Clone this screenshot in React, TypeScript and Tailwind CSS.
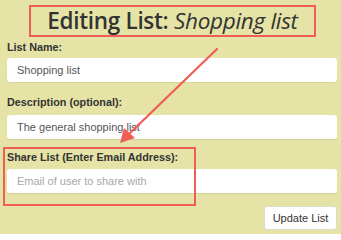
import React from "react";

export default function App() {
  return (
    <div className="relative w-[341px] h-[234px] overflow-hidden bg-[#e5e4a6] font-['Liberation_Sans',Arial,sans-serif]">
      <div className="flex flex-col pt-[5px] pl-[7px] pr-[4px]">
        <div className="ml-[22px] w-[287px] h-[32px] border-2 border-[#ef5d55] flex items-center justify-center">
          <h1 className="font-['Open_Sans',sans-serif] font-semibold text-[22.5px] leading-none text-[#333] whitespace-nowrap tracking-[-0.3px] pt-[1px]">
            Editing List: <em className="font-normal">Shopping list</em>
          </h1>
        </div>

        <label className="mt-[2px] h-[16px] leading-[16px] text-[10.8px] font-bold text-[#333]">List Name:</label>
        <input
          defaultValue="Shopping list"
          className="mt-[3px] h-[24px] w-full rounded-[3px] bg-white px-[10px] text-[11px] text-[#555] shadow-[0_1px_1px_rgba(0,0,0,0.08)] outline-none"
        />

        <label className="mt-[12px] h-[16px] leading-[16px] text-[10.8px] font-bold text-[#333]">Description (optional):</label>
        <input
          defaultValue="The general shopping list"
          className="mt-[5px] h-[24px] w-full rounded-[3px] bg-white px-[10px] text-[11px] text-[#555] shadow-[0_1px_1px_rgba(0,0,0,0.08)] outline-none"
        />

        <label className="mt-[10px] h-[16px] leading-[16px] text-[10.8px] font-bold text-[#333]">Share List (Enter Email Address):</label>
        <input
          placeholder="Email of user to share with"
          className="mt-[4px] h-[24px] w-full rounded-[3px] bg-white px-[10px] text-[11px] text-[#555] placeholder:text-[#a8a8a8] shadow-[0_1px_1px_rgba(0,0,0,0.08)] outline-none"
        />

        <button className="mt-[13px] self-end h-[24px] w-[73px] rounded-[3px] border border-[#dcdccc] bg-white text-[11px] text-[#333]">
          Update List
        </button>
      </div>

      {/* annotation box around share field */}
      <div className="absolute left-[3px] top-[147px] w-[193px] h-[59px] border-2 border-[#ef5d55]" />

      {/* annotation arrow */}
      <svg className="absolute inset-0 pointer-events-none" width="341" height="234" viewBox="0 0 341 234">
        <line x1="217" y1="49" x2="129" y2="134" stroke="#ef5d55" strokeWidth="2.2" strokeLinecap="round" />
        <polygon points="120,143 124,128 135,138" fill="#ef5d55" />
      </svg>
    </div>
  );
}
